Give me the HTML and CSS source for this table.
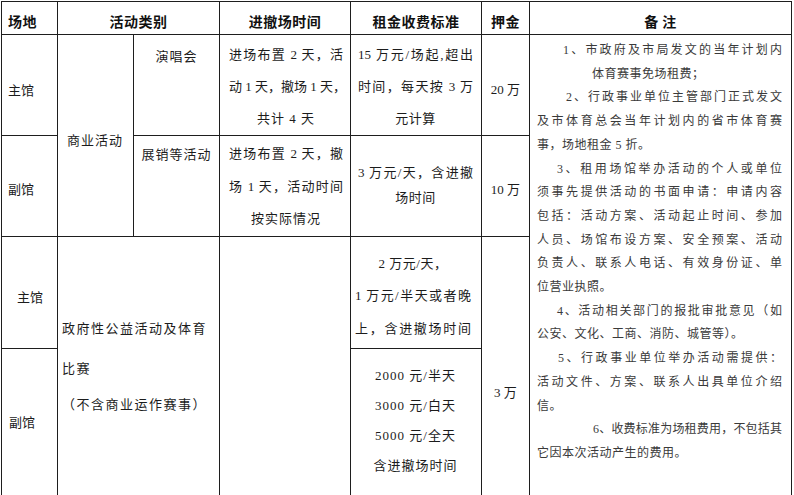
FILE: index.html
```html
<!DOCTYPE html>
<html lang="zh">
<head>
<meta charset="utf-8">
<title>场地租金收费标准</title>
<link rel="stylesheet" href="styles.css">
</head>
<body>
<table class="fee-table">
  <colgroup>
    <col class="c-venue"><col class="c-cat"><col class="c-sub"><col class="c-time"><col class="c-fee"><col class="c-dep"><col class="c-note">
  </colgroup>
  <thead>
    <tr class="r-head">
      <th class="h-left">场地</th>
      <th colspan="2">活动类别</th>
      <th>进撤场时间</th>
      <th>租金收费标准</th>
      <th>押金</th>
      <th>备 注</th>
    </tr>
  </thead>
  <tbody>
    <tr class="r1">
      <td class="venue v1">主馆</td>
      <td class="cat" rowspan="2">商业活动</td>
      <td class="sub s1">演唱会</td>
      <td class="time t1">
        <div class="j">进场布置 2 天，活</div>
        <div class="j">动 1 天，撤场 1 天，</div>
        <div class="c">共计 4 天</div>
      </td>
      <td class="fee f1">
        <div class="j">15 万元/场起,超出</div>
        <div class="j">时间，每天按 3 万</div>
        <div class="c">元计算</div>
      </td>
      <td class="dep d1">20 万</td>
      <td class="note" rowspan="4">
        <div class="j i1">1、市政府及市局发文的当年计划内</div>
        <div class="i2">体育赛事免场租费；</div>
        <div class="j i3">2、行政事业单位主管部门正式发文</div>
        <div class="j">及市体育总会当年计划内的省市体育赛</div>
        <div>事，场地租金 5 折。</div>
        <div class="j i4">3、租用场馆举办活动的个人或单位</div>
        <div class="j">须事先提供活动的书面申请：申请内容</div>
        <div class="j">包括：活动方案、活动起止时间、参加</div>
        <div class="j">人员、场馆布设方案、安全预案、活动</div>
        <div class="j">负责人、联系人电话、有效身份证、单</div>
        <div>位营业执照。</div>
        <div class="j i4">4、活动相关部门的报批审批意见（如</div>
        <div>公安、文化、工商、消防、城管等）。</div>
        <div class="j i5">5、行政事业单位举办活动需提供：</div>
        <div class="j">活动文件、方案、联系人出具单位介绍</div>
        <div>信。</div>
        <div class="j i6">6、收费标准为场租费用，不包括其</div>
        <div>它因本次活动产生的费用。</div>
      </td>
    </tr>
    <tr class="r2">
      <td class="venue v2">副馆</td>
      <td class="sub s2">展销等活动</td>
      <td class="time t2">
        <div class="j">进场布置 2 天，撤</div>
        <div class="j">场 1 天，活动时间</div>
        <div class="c">按实际情况</div>
      </td>
      <td class="fee f2">
        <div class="j">3 万元/天，含进撤</div>
        <div class="c">场时间</div>
      </td>
      <td class="dep d2">10 万</td>
    </tr>
    <tr class="r3">
      <td class="venue v3">主馆</td>
      <td class="gov" colspan="2" rowspan="2">
        <div class="gov-main">政府性公益活动及体育<br>比赛</div>
        <div class="gov-note">（不含商业运作赛事）</div>
      </td>
      <td class="time" rowspan="2"></td>
      <td class="fee f3">
        <div class="c">2 万元/天，</div>
        <div class="j">1 万元/半天或者晚</div>
        <div class="j">上，含进撤场时间</div>
      </td>
      <td class="dep d3" rowspan="2">3 万</td>
    </tr>
    <tr class="r4">
      <td class="venue v4">副馆</td>
      <td class="fee f4">
        <div class="c">2000 元/半天</div>
        <div class="c">3000 元/白天</div>
        <div class="c">5000 元/全天</div>
        <div class="c">含进撤场时间</div>
      </td>
    </tr>
  </tbody>
</table>
</body>
</html>
```

FILE: styles.css
```css
html, body {
  margin: 0;
  padding: 0;
  overflow: hidden;
  background: #ffffff;
}

body {
  font-family: "Liberation Serif", "Noto Sans CJK SC", serif;
  color: #1c1c1c;
  font-size: 13px;
}

.fee-table {
  border-collapse: collapse;
  table-layout: fixed;
  width: 790px;
  margin: 1px 0 0 1px;
}

.c-venue { width: 56px; }
.c-cat { width: 76px; }
.c-sub { width: 86px; }
.c-time { width: 131px; }
.c-fee { width: 131px; }
.c-dep { width: 48px; }
.c-note { width: 262px; }

th, td {
  border: 1px solid #1e1e1e;
  vertical-align: top;
  padding: 0;
  font-weight: 400;
}

th {
  font-family: "Noto Sans CJK SC", sans-serif;
  font-weight: 700;
  font-size: 14px;
  letter-spacing: 0.5px;
  line-height: 20px;
  padding-top: 9px;
  text-align: center;
  color: #111;
}

th.h-left {
  text-align: left;
  padding-left: 6px;
}

.r-head { height: 33px; }
.r1 { height: 101px; }
.r2 { height: 100px; }
.r3 { height: 112px; }
.r4 { height: 200px; }

.j {
  text-align: justify;
  text-align-last: justify;
  letter-spacing: 0;
  white-space: nowrap;
}

.c {
  text-align: center;
}

.venue {
  line-height: 20px;
  letter-spacing: 0;
  padding-left: 6px;
}
.v1 { padding-top: 46px; }
.v2 { padding-top: 44px; }
.v3 { padding-top: 51px; padding-left: 15px; }
.v4 { padding-top: 64px; padding-left: 7px; }

.cat {
  line-height: 20px;
  letter-spacing: 1px;
  padding: 96px 0 0 9px;
}

.sub {
  line-height: 20px;
  letter-spacing: 1px;
  text-align: center;
}
.s1 { padding-top: 12px; }
.s2 { padding-top: 9px; }

.time {
  letter-spacing: 1px;
  padding-left: 9px;
  padding-right: 7px;
}
.t1 { line-height: 32px; padding-top: 4px; }
.t2 { line-height: 32.5px; padding-top: 2px; }

.fee {
  letter-spacing: 0.5px;
  padding-left: 7px;
  padding-right: 8px;
}
.f1 { line-height: 32px; padding-top: 4px; }
.f2 { line-height: 25px; padding-top: 24px; }
.f3 { line-height: 32.5px; padding-top: 11px; padding-left: 4px; padding-right: 10px; }
.f4 { line-height: 30px; padding-top: 12px; letter-spacing: 1px; }

.dep {
  line-height: 20px;
  text-align: center;
}
.d1 { padding-top: 45px; }
.d2 { padding-top: 44px; }
.d3 { padding-top: 146px; }

.gov {
  letter-spacing: 1.5px;
  padding: 72px 0 0 4px;
}
.gov-main { line-height: 40px; }
.gov-note { line-height: 32px; }

.note {
  font-size: 12px;
  color: #3a3a3a;
  letter-spacing: 0.5px;
  line-height: 23.7px;
  padding: 4px 9px 0 7px;
}

.i1 { margin-left: 26px; }
.i2 { margin-left: 55px; }
.i3 { margin-left: 29px; }
.i4 { margin-left: 20px; }
.i5 { margin-left: 21px; }
.i6 { margin-left: 56px; }
```
